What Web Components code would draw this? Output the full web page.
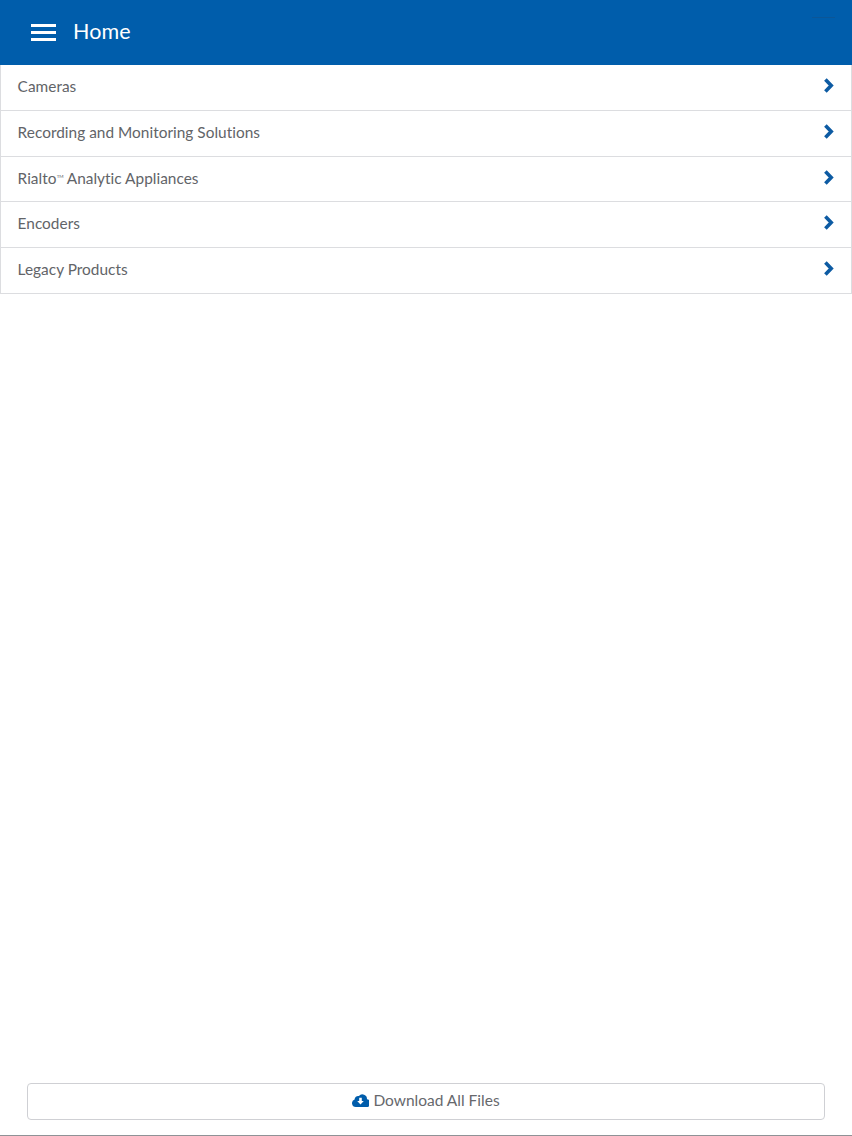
<!DOCTYPE html>
<html lang="en"><head><meta charset="utf-8"><title>Home</title>
<style>
html,body{margin:0;padding:0;background:#fff;height:100%}
body{font-family:"Lato","Liberation Sans",sans-serif;}
</style></head>
<body>
<app-shell>
  <app-header slot="header" title="Home"></app-header>
  <nav-list>
    <nav-row>Cameras</nav-row>
    <nav-row>Recording and Monitoring Solutions</nav-row>
    <nav-row>Rialto<tm-mark></tm-mark> Analytic Appliances</nav-row>
    <nav-row>Encoders</nav-row>
    <nav-row>Legacy Products</nav-row>
  </nav-list>
  <download-button slot="footer">Download All Files</download-button>
</app-shell>
<script>
function def(name, html, init){
  customElements.define(name, class extends HTMLElement{
    constructor(){super();this.attachShadow({mode:'open'}).innerHTML=html;}
    connectedCallback(){ if(init) init(this); }
  });
}
def('app-shell',`<style>
:host{display:flex;flex-direction:column;height:1136px;box-sizing:border-box;border-bottom:1px solid #8f9296;overflow:hidden}
main{flex:1;min-height:0}
footer{padding:0 27px 15px 27px}
</style><slot name="header"></slot><main><slot></slot></main><footer><slot name="footer"></slot></footer>`);
def('app-header',`<style>
:host{display:flex;align-items:center;position:relative;height:65px;box-sizing:border-box;background:#005dab;color:#fff;padding:0 0 4px 31px;gap:17px;font-size:21.5px;letter-spacing:.1px}
svg{display:block;width:25px;height:18px;flex:none;margin-top:4px}
.ghost{position:absolute;left:812px;top:17px;width:23px;height:1px;background:#0b5697}
</style><svg viewBox="0 0 25 18"><rect x="0" y="0" width="25" height="3" fill="#fff"/><rect x="0" y="7" width="25" height="3" fill="#fff"/><rect x="0" y="14" width="25" height="3" fill="#fff"/></svg><span id="t"></span><i class="ghost"></i>`,
el=>{el.shadowRoot.getElementById('t').textContent=el.getAttribute('title');el.removeAttribute('title');});
def('nav-list',`<style>
:host{display:block;margin-top:.2px;border:1px solid #dcdde0;border-top:0;border-bottom:0}
</style><slot></slot>`);
def('nav-row',`<style>
:host{display:flex;align-items:center;justify-content:space-between;height:45.7px;box-sizing:border-box;border-bottom:1px solid #dcdde0;padding:0 17px 0 16.6px;color:#626468;font-size:15.4px;letter-spacing:.02px;background:#fff}
span{padding-bottom:2.3px}
svg{display:block;width:11px;height:15px;flex:none;margin-top:-3.6px}
</style><span><slot></slot></span><svg viewBox="0 0 11 15"><path d="M2.4 1.5 L8.2 7.5 L2.4 13.5" fill="none" stroke="#0d5ba3" stroke-width="3.6"/></svg>`);
def('tm-mark',`<style>
:host{display:inline-block;font-size:4.6px;vertical-align:6px;line-height:0;margin-left:.3px;letter-spacing:-.2px}
</style>TM`);
def('download-button',`<style>
:host{display:flex;align-items:center;justify-content:center;gap:4px;height:37px;box-sizing:border-box;border:1px solid #cfd0d4;border-radius:4px;background:#fff;color:#66686c;font-size:15.5px}
span{padding-bottom:3px}
svg{display:block;width:17px;height:13px;flex:none;margin-top:-3px}
</style><svg viewBox="0 0 17 13"><path fill="#005dab" fill-rule="evenodd" d="M3.8 13A3.8 3.8 0 0 1 2.6 5.6 3.6 3.6 0 0 1 6.9 2 4.6 4.6 0 0 1 15 5.2 3.9 3.9 0 0 1 13.4 13Z M7.2 3.8V7H5.2L8.5 10.4 11.8 7H9.8V3.8Z"/></svg><span><slot></slot></span>`);
</script>
</body></html>
